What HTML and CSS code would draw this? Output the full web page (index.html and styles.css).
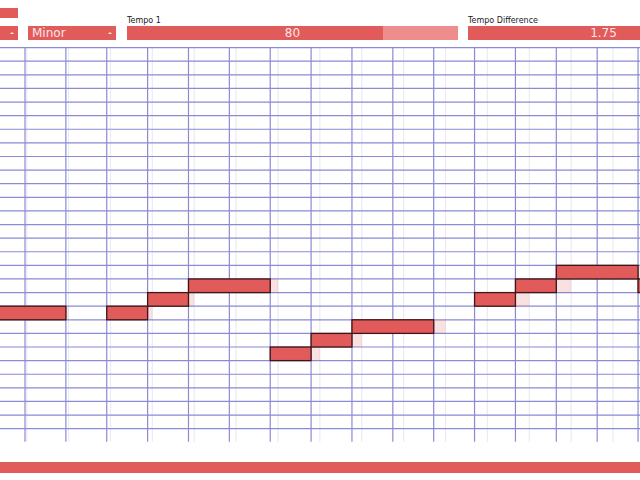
FILE: index.html
```html
<!DOCTYPE html>
<html lang="en">
<head>
    <meta charset="UTF-8">
    <meta name="viewport" content="width=device-width, initial-scale=1.0">
    <title>Piano Roll</title>
    <link rel="stylesheet" href="styles.css">
</head>
<body>

    <div class="toolbar">
        <div class="field field-key">
            <div class="button"></div>
            <div class="select"><span></span><i class="caret"></i></div>
        </div>
        <div class="field field-scale">
            <div class="select"><span>Minor</span><i class="caret"></i></div>
        </div>
        <div class="field field-tempo">
            <label>Tempo 1</label>
            <div class="slider">
                <div class="slider-fill" style="width: 77.3%"></div>
                <span class="slider-value">80</span>
            </div>
        </div>
        <div class="field field-diff">
            <label>Tempo Difference</label>
            <div class="slider">
                <div class="slider-fill" style="width: 100%"></div>
                <span class="slider-value">1.75</span>
            </div>
        </div>
    </div>

    <div id="roll" class="roll"></div>

    <div class="transport"></div>

    <script>
        const BEAT = 40.87, ROW = 13.61, ROWS = 29, BEATS = 17;
        const ORIGIN = -15.87;
        // second tempo runs slightly slower, drawn as a faint grid
        const GHOST_BEAT = 41.88, GHOST_ORIGIN = -15.18;

        // [start beat, length, row]
        const notes = [
            [0, 2, 19], [3, 1, 19], [4, 1, 18], [5, 2, 17],
            [7, 1, 22], [8, 1, 21], [9, 2, 20],
            [12, 1, 18], [13, 1, 17], [14, 2, 16], [16, 2, 17]
        ];

        const NS = 'http://www.w3.org/2000/svg';
        const W = 640, H = ROWS * ROW;

        function el(name, attrs){
            const e = document.createElementNS(NS, name);
            for (const k in attrs) e.setAttribute(k, attrs[k]);
            return e;
        }

        const svg = el('svg', { width: W, height: H, viewBox: `0 0 ${W} ${H}` });

        for (let b = 0; b < BEATS; b++){
            const x = GHOST_ORIGIN + GHOST_BEAT * b;
            svg.appendChild(el('line', { x1: x, y1: 0, x2: x, y2: H, class: 'ghost-line' }));
        }
        for (let r = 0; r < ROWS; r++){
            const y = r * ROW + 0.6;
            svg.appendChild(el('line', { x1: 0, y1: y, x2: W, y2: y, class: 'grid-line' }));
        }
        for (let b = 0; b < BEATS; b++){
            const x = ORIGIN + BEAT * b;
            svg.appendChild(el('line', { x1: x, y1: 0, x2: x, y2: H, class: 'grid-line' }));
        }

        notes.forEach(([start, len, row]) => {
            const x = GHOST_ORIGIN + GHOST_BEAT * start;
            svg.appendChild(el('rect', {
                x: x, y: row * ROW + 0.6, width: GHOST_BEAT * len, height: ROW,
                class: 'ghost-note'
            }));
        });
        notes.forEach(([start, len, row]) => {
            svg.appendChild(el('rect', {
                x: ORIGIN + BEAT * start, y: row * ROW + 0.6,
                width: BEAT * len, height: ROW, class: 'note'
            }));
        });

        document.getElementById('roll').appendChild(svg);
    </script>
</body>
</html>
```

FILE: styles.css
```css
body {
    margin: 0;
    background: #fff;
    font-family: 'DejaVu Sans', sans-serif;
    overflow: hidden;
    width: 640px;
    height: 480px;
}
.toolbar {
    display: flex;
    align-items: flex-end;
    gap: 10px;
    padding-top: 8px;
    height: 32px;
    margin-bottom: 7px;
}
.field {
    display: flex;
    flex-direction: column;
    flex-shrink: 0;
}
.field label {
    font-size: 8px;
    color: #222;
    line-height: 9px;
    margin-bottom: 1px;
}
.field-key {
    width: 80px;
    margin-left: -62px;
    gap: 8px;
}
.field-scale {
    width: 88px;
}
.field-tempo {
    width: 331px;
    margin-left: 1px;
}
.field-diff {
    width: 271px;
}
.button {
    height: 10px;
    background: #e15b5b;
}
.select {
    height: 14px;
    background: #e15b5b;
    color: #fbe7e7;
    font-size: 12px;
    line-height: 14px;
    display: flex;
    align-items: center;
    justify-content: space-between;
    padding: 0 4px;
}
.caret {
    width: 0;
    height: 0;
    border-left: 2px solid transparent;
    border-right: 2px solid transparent;
    border-bottom: 2px solid #fbe7e7;
}
.slider {
    position: relative;
    height: 14px;
    background: #ef8c8c;
}
.slider-fill {
    height: 100%;
    background: #e15b5b;
}
.slider-value {
    position: absolute;
    inset: 0;
    text-align: center;
    color: #fbe7e7;
    font-size: 12px;
    line-height: 14px;
}
.roll {
    height: 395px;
    line-height: 0;
}
.roll svg {
    display: block;
}
.grid-line {
    stroke: #8a8ad6;
    stroke-width: 1.2;
}
.ghost-line {
    stroke: #ebebf1;
    stroke-width: 1.2;
}
.ghost-note {
    fill: #e15b5b;
    fill-opacity: 0.18;
}
.note {
    fill: #e15b5b;
    stroke: #3e1616;
    stroke-width: 1.3;
}
.transport {
    margin-top: 20px;
    height: 11px;
    background: #e15b5b;
}
```
